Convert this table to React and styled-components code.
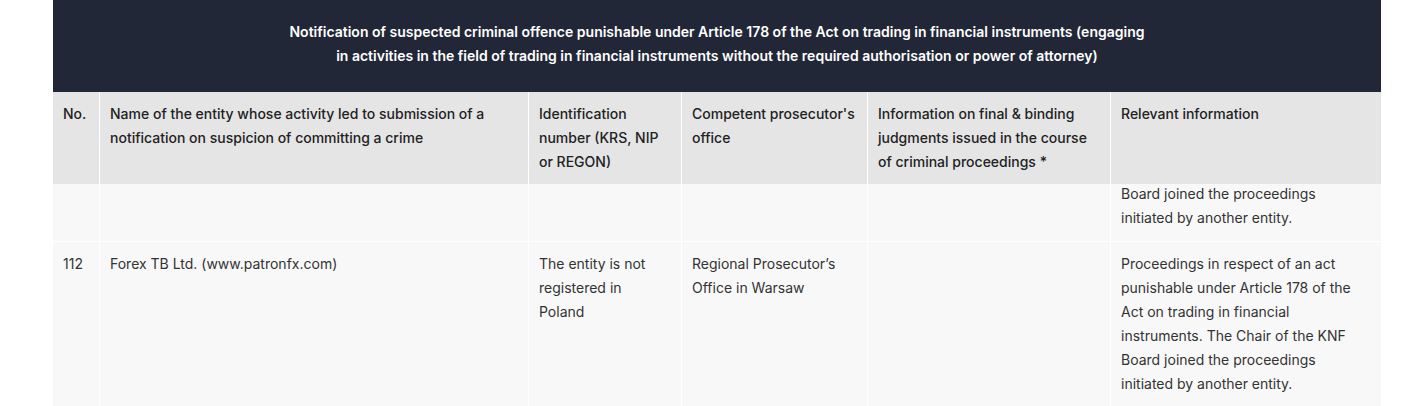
import React from "react";
import styled, { createGlobalStyle } from "styled-components";

const Global = createGlobalStyle`
  html, body { margin: 0; padding: 0; background: #fff; }
  body { font-family: Inter, "Noto Sans", sans-serif; }
`;

const Page = styled.div`
  padding-left: 53px;
  width: 1328px;
`;

const Table = styled.div`
  display: flex;
  flex-direction: column;
  width: 1328px;
`;

const Caption = styled.div`
  background: #222738;
  color: #fff;
  padding: 20px 0 24px;
`;

const CaptionText = styled.div`
  max-width: 862px;
  margin: 0 auto;
  text-align: center;
  font-size: 14px;
  line-height: 24px;
  font-weight: 600;
`;

const cols = "46px 428px 152px 185px 242px 270px";

const HeadRow = styled.div`
  display: grid;
  grid-template-columns: ${cols};
  column-gap: 1px;
  background: #fff;
`;

const HeadCell = styled.div`
  background: #e5e5e5;
  color: #222;
  font-size: 14px;
  font-weight: 500;
  line-height: 24px;
  padding: 10px 10px 10px;
`;

const Row = styled.div`
  display: grid;
  grid-template-columns: ${cols};
  column-gap: 1px;
  background: #fff;
  border-top: ${(p) => (p.$first ? "none" : "1px solid #fff")};
  overflow: hidden;
`;

const Cell = styled.div`
  background: #f8f8f8;
  color: #333;
  font-size: 14px;
  font-weight: 400;
  line-height: 24px;
  padding: ${(p) => (p.$clipped ? "0 10px 11px" : "10px")};
  padding-right: ${(p) => (p.$narrow ? "16px" : "10px")};
`;

const ClippedText = styled.div`
  margin-top: -2px;
`;

const headers = [
  "No.",
  "Name of the entity whose activity led to submission of a notification on suspicion of committing a crime",
  "Identification number (KRS, NIP or REGON)",
  "Competent prosecutor's office",
  "Information on final & binding judgments issued in the course of criminal proceedings *",
  "Relevant information",
];

const rows = [
  {
    no: "112",
    name: "Forex TB Ltd. (www.patronfx.com)",
    id: "The entity is not registered in Poland",
    office: "Regional Prosecutor’s Office in Warsaw",
    judgments: "",
    info:
      "Proceedings in respect of an act punishable under Article 178 of the Act on trading in financial instruments. The Chair of the KNF Board joined the proceedings initiated by another entity.",
  },
];

export default function App() {
  return (
    <>
      <Global />
      <Page>
        <Table>
          <Caption>
            <CaptionText>
              Notification of suspected criminal offence punishable under Article 178 of the Act on
              trading in financial instruments (engaging in activities in the field of trading in
              financial instruments without the required authorisation or power of attorney)
            </CaptionText>
          </Caption>
          <HeadRow>
            {headers.map((h) => (
              <HeadCell key={h}>{h}</HeadCell>
            ))}
          </HeadRow>
          <Row $first>
            <Cell $clipped />
            <Cell $clipped />
            <Cell $clipped $narrow />
            <Cell $clipped />
            <Cell $clipped />
            <Cell $clipped>
              <ClippedText>
                Board joined the proceedings
                <br />
                initiated by another entity.
              </ClippedText>
            </Cell>
          </Row>
          {rows.map((r) => (
            <Row key={r.no}>
              <Cell>{r.no}</Cell>
              <Cell>{r.name}</Cell>
              <Cell $narrow>{r.id}</Cell>
              <Cell>{r.office}</Cell>
              <Cell>{r.judgments}</Cell>
              <Cell>{r.info}</Cell>
            </Row>
          ))}
        </Table>
      </Page>
    </>
  );
}
